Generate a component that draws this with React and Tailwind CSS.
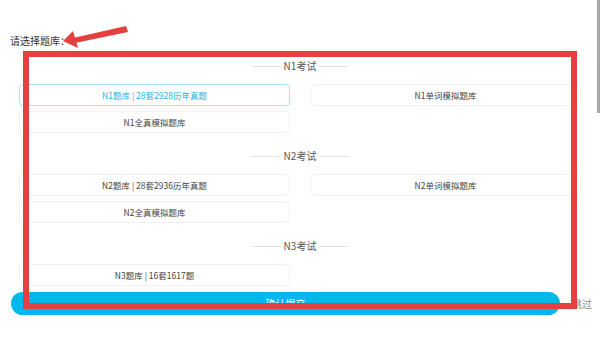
import React, { useState } from "react";

const sections = [
  {
    title: "N1考试",
    items: ["N1题库 | 28套2928历年真题", "N1单词模拟题库", "N1全真模拟题库"],
  },
  {
    title: "N2考试",
    items: ["N2题库 | 28套2936历年真题", "N2单词模拟题库", "N2全真模拟题库"],
  },
  {
    title: "N3考试",
    items: ["N3题库 | 16套1617题"],
  },
];

const SectionTitle = ({ title }) => (
  <div className="flex items-center justify-center h-[18px] gap-[3px]">
    <div className="w-[29px] h-px bg-[#e2e2e2]" />
    <span className="text-[10px] leading-[18px] text-[#555]">{title}</span>
    <div className="w-[29px] h-px bg-[#e2e2e2]" />
  </div>
);

export default function App() {
  const [selected, setSelected] = useState("N1题库 | 28套2928历年真题");

  return (
    <div
      className="relative w-[600px] h-[337px] overflow-hidden bg-white"
      style={{ fontFamily: '"Noto Sans CJK SC", "Noto Sans", sans-serif' }}
    >
      {/* header */}
      <div className="pt-[33px] pl-[10px] text-[10px] leading-[16px] text-[#333]">请选择题库：</div>

      {/* sections */}
      {sections.map((section, idx) => (
        <div key={section.title} className={idx === 0 ? "mt-[8px]" : "mt-[14px]"}>
          <SectionTitle title={section.title} />
          <div className="grid grid-cols-2 gap-x-[20px] gap-y-[5px] px-[19px] mt-[9px]">
            {section.items.map((item) => {
              const active = item === selected;
              return (
                <button
                  key={item}
                  onClick={() => setSelected(item)}
                  className={
                    active
                      ? "h-[22px] rounded-[4px] border border-[#a6e3f5] text-[8.5px] text-[#27b1e6] bg-white"
                      : "h-[22px] rounded-[4px] border border-[#f1f1f1] text-[8.5px] text-[#444] bg-white"
                  }
                >
                  {item}
                </button>
              );
            })}
          </div>
        </div>
      ))}

      {/* submit */}
      <div className="flex items-center mt-[6px]">
        <button className="ml-[11px] w-[549px] h-[23px] rounded-full bg-[#00b7ee] text-white text-[10px]">
          确认提交
        </button>
        <span className="ml-[12px] text-[10px] text-[#888]">跳过</span>
      </div>

      {/* scrollbar */}
      <div className="absolute right-0 top-0 w-[3px] h-[113px] bg-[#a8a8a8]" />

      {/* annotation box */}
      <div className="absolute left-[23px] top-[51px] w-[554px] h-[258px] border-[6px] border-[#e4403f]" />

      {/* annotation arrow */}
      <svg className="absolute left-0 top-0" width="140" height="60" viewBox="0 0 140 60">
        <polygon points="126,26 128,32 75,43 73,38" fill="#e4403f" />
        <polygon points="63,41 73,31 78,48" fill="#e4403f" />
      </svg>
    </div>
  );
}
